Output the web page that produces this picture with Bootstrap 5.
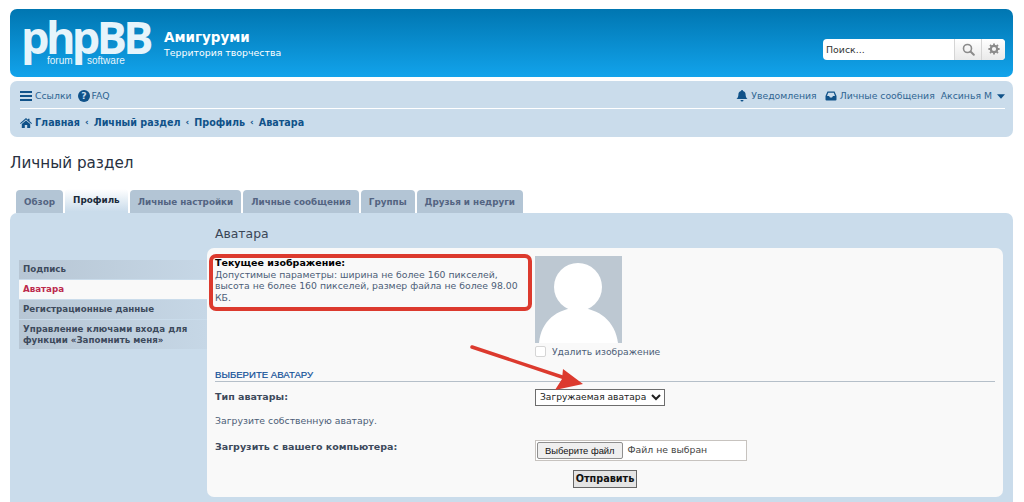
<!DOCTYPE html>
<html lang="ru">
<head>
  <meta charset="UTF-8">
  <title>Личный раздел</title>
  <link href="https://cdn.jsdelivr.net/npm/bootstrap@5.3.0/dist/css/bootstrap.min.css" rel="stylesheet">
  <style>
    html, body { height: 502px; overflow: hidden; }
    body {
      background: #fff;
      font-family: "DejaVu Sans", Verdana, sans-serif;
      font-size: 9.3px;
      color: #4c5d77;
      line-height: 1.15;
    }
    .stranica { position: relative; height: 502px; padding: 9px 11px 0 10px; }

    .shapka {
      height: 68px;
      border-radius: 7px;
      background: linear-gradient(180deg, #0076b1 0%, #12a3eb 100%);
      padding: 0 8px 0 13px;
      color: #fff;
    }
    .logotip { position: relative; width: 141px; height: 68px; }
    .logotip-slovo {
      position: absolute; left: -2px; top: -6px;
      font-family: "Open Sans", sans-serif; font-weight: 700;
      font-size: 45px; line-height: 68px; letter-spacing: -3.6px; color: #e6f4fb;
    }
    .logotip-mal { position: absolute; top: 46px; font-family: "Liberation Sans", sans-serif; font-size: 10px; color: #e6f4fb; line-height: 12px; }
    .sait-nazv { font-size: 13.5px; font-weight: 700; line-height: 18px; margin-top: -1px; }
    .sait-opis { font-size: 9.4px; line-height: 13px; }
    .poisk {
      width: 182px; height: 21px;
      background: #fff; border-radius: 4px; overflow: hidden;
    }
    .poisk-pole { flex: 1; padding-left: 3px; font-size: 9.4px; color: #333; line-height: 21px; }
    .poisk-knopka { height: 21px; border-left: 1px solid #d5d5d5; background: linear-gradient(180deg, #fff, #e9e9e9); }

    .navpanel {
      margin-top: 4px; height: 56px;
      background: #cadceb; border-radius: 7px;
      padding: 0 8px 0 10px;
    }
    .navryad { height: 28px; color: #105289; }
    .navryad1 { border-bottom: 1px solid #fff; padding-top: 3px; font-size: 9.3px; }
    .navryad a { color: #2f6592; text-decoration: none; }
    .navryad svg { flex: none; }
    .kroshki { font-weight: 700; font-size: 9.6px; height: 27px; }
    .kroshki a { color: #105289; }
    .strelka { color: #105289; font-size: 9px; margin: 0 5px; font-weight: 700; }

    .zagolovok { font-size: 15.2px; font-weight: 400; color: #28313f; margin: 17px 0 0 0; line-height: 19px; height: 36px; }

    .vkladki { padding-left: 6px; height: 23px; gap: 2px; align-items: flex-end; }
    .vkladki a {
      display: block; height: 23px; line-height: 24px; padding: 0 8px;
      background: #b3c5d5; border-radius: 4px 4px 0 0;
      color: #536482; font-weight: 700; font-size: 8.8px; text-decoration: none;
    }
    .vkladki a.aktivna {
      height: 25px; line-height: 22px; color: #1a2a3a; margin-bottom: -1px; position: relative;
      background: linear-gradient(180deg, #fff 0%, #cadceb 90%);
    }

    .panel-osn { background: #cadceb; border-radius: 7px 7px 0 0; height: 289px; padding: 0 10px 0 9px; }
    .bokovoe { width: 188px; padding-top: 46px; flex: none; }
    .bokovoe a {
      display: block; padding: 4px 4px; min-height: 20px;
      border-top: 1px solid #cadceb;
      font-weight: 700; font-size: 8.7px; line-height: 10.5px;
      color: #3d4a5c; text-decoration: none;
      background: linear-gradient(90deg, #b7c6d4, #c6d7e6);
    }
    .bokovoe a.aktivna { background: #f9f9f9; color: #bc2a4d; }

    .soderzhimoe { flex: 1; min-width: 0; }
    .podzag { font-size: 12.4px; color: #3a4656; height: 35px; line-height: 15px; padding: 13px 0 0 8px; }
    .yashchik { height: 249px; background: #f9f9f9; border-radius: 7px; padding: 8px 8px 0 8px; position: relative; }

    .metka { width: 320px; flex: none; }
    .tekst-par { line-height: 11.5px; }
    .tekst-par b { color: #000; font-size: 9.5px; display: block; }
    .avatarka { display: block; width: 87px; height: 87px; background: #bdc8d2; }
    .udalit { height: 13px; margin-top: 2px; gap: 6px; line-height: 13px; font-size: 9.2px; }
    .galka { width: 11px; height: 11px; background: #fff; border: 1px solid #d5d5d5; border-radius: 2px; }
    .razdel { margin-top: 11px; height: 13px; border-bottom: 1px solid #b5bfc9; font-family: "Liberation Sans", sans-serif; font-size: 9.6px; line-height: 11px; color: #115098; text-transform: uppercase; -webkit-text-stroke: .2px #115098; }
    .razdel-ryad { margin-top: 6px; height: 18px; }
    .zhirno { font-weight: 700; font-size: 9.5px; color: #3d4a5c; line-height: 14px; }
    .vybor {
      width: 130px; height: 17px; font-family: "DejaVu Sans", sans-serif; font-size: 9.1px; padding: 0;
      border: 1px solid #6d6d6d; background: #fff; color: #222;
    }
    .zagruz { width: 212px; height: 21px; background: #fff; border: 1px solid #c7c3bf; padding-left: 1px; color: #444; gap: 5px; }
    .zagruz-knopka { height: 17px; line-height: 15px; padding: 0 7px; font-family: "Liberation Sans", sans-serif; font-size: 9.4px; border: 1px solid #8f8f8f; border-radius: 2px; background: #efefef; color: #111; }
    .otpravit {
      display: block; margin: 9px auto 0; width: 64px; height: 18px; padding: 0;
      font-family: "DejaVu Sans", sans-serif; font-weight: 700; font-size: 9.7px; line-height: 16px; color: #111;
      background: #e4e4e4; border: 1px solid #666; border-radius: 0;
    }

    .krasnaya-ramka {
      position: absolute; left: 209px; top: 254px; width: 323px; height: 57px;
      border: 4px solid #dc3a2e; border-radius: 7px; pointer-events: none;
    }
    .krasnaya-strelka { position: absolute; left: 460px; top: 340px; width: 135px; height: 55px; }
  </style>
</head>
<body>
  <div class="stranica">

    <!-- Шапка -->
    <div class="shapka d-flex justify-content-between">
      <div class="d-flex">
        <div class="logotip">
          <span class="logotip-slovo">phpBB</span>
          <span class="logotip-mal" style="left:24px">forum</span>
          <span class="logotip-mal" style="left:64px">software</span>
        </div>
        <div style="padding-top:20px">
          <div class="sait-nazv">Амигуруми</div>
          <div class="sait-opis">Территория творчества</div>
        </div>
      </div>
      <div class="d-flex align-items-center" style="padding-top:12px">
        <div class="poisk d-flex">
          <div class="poisk-pole">Поиск...</div>
          <div class="poisk-knopka d-flex align-items-center justify-content-center" style="width:27px">
            <svg width="13" height="13" viewBox="0 0 13 13"><circle cx="5.5" cy="5.5" r="4" fill="none" stroke="#8b8b8b" stroke-width="1.6"/><path d="M8.5 8.5l3.3 3.3" stroke="#8b8b8b" stroke-width="2" stroke-linecap="round"/></svg>
          </div>
          <div class="poisk-knopka d-flex align-items-center justify-content-center" style="width:24px">
            <svg width="12" height="12" viewBox="0 0 12 12"><circle cx="6" cy="6" r="3.2" fill="none" stroke="#8b8b8b" stroke-width="2.2"/><path d="M6 .4v2M6 9.6v2M.4 6h2M9.6 6h2M2 2l1.4 1.4M8.6 8.6L10 10M10 2L8.6 3.4M3.4 8.6L2 10" stroke="#8b8b8b" stroke-width="1.8"/></svg>
          </div>
        </div>
      </div>
    </div>

    <!-- Навигация -->
    <div class="navpanel">
      <div class="navryad navryad1 d-flex justify-content-between align-items-center">
        <div class="d-flex align-items-center">
          <svg width="12" height="10" viewBox="0 0 12 10" style="margin-right:3px"><path d="M0 1h12M0 5h12M0 9h12" stroke="#105289" stroke-width="2"/></svg>
          <a href="#" style="margin-right:6px">Ссылки</a>
          <svg width="12" height="12" viewBox="0 0 11 11" style="margin-right:2px"><circle cx="5.5" cy="5.5" r="5.5" fill="#105289"/><text x="5.5" y="8.6" text-anchor="middle" font-size="8.5" font-weight="700" fill="#cadceb" font-family="DejaVu Sans">?</text></svg>
          <a href="#">FAQ</a>
        </div>
        <div class="d-flex align-items-center">
          <svg width="12" height="12" viewBox="0 0 12 12" style="margin-right:3px"><path d="M6 0c.6 0 1 .4 1 .9 1.700.4 2.600 1.700 2.600 3.500 0 2.400.8 3.500 1.900 4.600H.5C1.600 7.900 2.400 6.800 2.400 4.400 2.400 2.600 3.300 1.300 5 .9 5 .4 5.400 0 6 0zM4.500 10h3a1.500 1.500 0 0 1-3 0z" fill="#105289"/></svg>
          <a href="#" class="me-2">Уведомления</a>
          <svg width="12" height="10" viewBox="0 0 12 10" style="margin-right:3px"><path d="M2.500.5h7L11.500 5v3.500a1 1 0 0 1-1 1h-9a1 1 0 0 1-1-1V5z" fill="#105289"/><path d="M3.200 1.800h5.600L10 5H8L7 6.500H5L4 5H2z" fill="#cadceb"/></svg>
          <a href="#" style="margin-right:6px">Личные сообщения</a>
          <a href="#">Аксинья М</a>
          <svg width="8" height="5" viewBox="0 0 9 5" style="margin-left:5px"><path d="M0 0h9L4.500 5z" fill="#105289"/></svg>
        </div>
      </div>
      <div class="navryad kroshki d-flex align-items-center">
        <svg width="12" height="10" viewBox="0 0 12 10" style="margin-right:3px"><path d="M6 0l2 1.700V.8h1.500V3L12 5.200l-.7.700L6 1.400.7 5.900 0 5.200zM1.800 6L6 2.500 10.200 6v4H7.200V7H4.800v3H1.800z" fill="#105289"/></svg>
        <a href="#">Главная</a><span class="strelka">‹</span><a href="#">Личный раздел</a><span class="strelka">‹</span><a href="#">Профиль</a><span class="strelka">‹</span><a href="#">Аватара</a>
      </div>
    </div>

    <h2 class="zagolovok">Личный раздел</h2>

    <!-- Вкладки -->
    <div class="vkladki d-flex">
      <a href="#">Обзор</a>
      <a href="#" class="aktivna">Профиль</a>
      <a href="#">Личные настройки</a>
      <a href="#">Личные сообщения</a>
      <a href="#">Группы</a>
      <a href="#">Друзья и недруги</a>
    </div>

    <div class="panel-osn d-flex">
      <div class="bokovoe">
        <a href="#">Подпись</a>
        <a href="#" class="aktivna">Аватара</a>
        <a href="#">Регистрационные данные</a>
        <a href="#">Управление ключами входа для функции «Запомнить меня»</a>
      </div>
      <div class="soderzhimoe">
        <div class="podzag">Аватара</div>
        <div class="yashchik">
          <div class="d-flex" style="height:87px">
            <div class="metka tekst-par pe-2" style="padding-top:1px"><b>Текущее изображение:</b>Допустимые параметры: ширина не более 160 пикселей, высота не более 160 пикселей, размер файла не более 98.00 КБ.</div>
            <svg class="avatarka" viewBox="0 0 87 87"><circle cx="43" cy="31" r="24" fill="#fff"/><path d="M4 87C6 65 22 52 43 52s37 13 40 35z" fill="#fff"/></svg>
          </div>
          <div class="udalit d-flex align-items-center" style="margin-left:320px">
            <span class="galka"></span><span>Удалить изображение</span>
          </div>
          <div class="razdel">Выберите аватару</div>
          <div class="razdel-ryad d-flex align-items-center">
            <div class="metka zhirno">Тип аватары:</div>
            <select class="vybor"><option>Загружаемая аватара</option></select>
          </div>
          <div style="margin-top:8px;height:14px;line-height:14px">Загрузите собственную аватару.</div>
          <div class="d-flex" style="margin-top:12px">
            <div class="metka zhirno">Загрузить с вашего компьютера:</div>
            <div class="zagruz d-flex align-items-center">
              <span class="zagruz-knopka">Выберите файл</span><span>Файл не выбран</span>
            </div>
          </div>
          <button type="button" class="otpravit">Отправить</button>
        </div>
      </div>
    </div>

    <!-- Пометки поверх скриншота -->
    <div class="krasnaya-ramka"></div>
    <svg class="krasnaya-strelka" viewBox="0 0 135 55">
      <path d="M12 7L105 38" stroke="#dc3a2e" stroke-width="3.500" stroke-linecap="round"/>
      <path d="M103 29L123 44L95 50L102 39z" fill="#dc3a2e"/>
    </svg>
  </div>
</body>
</html>
